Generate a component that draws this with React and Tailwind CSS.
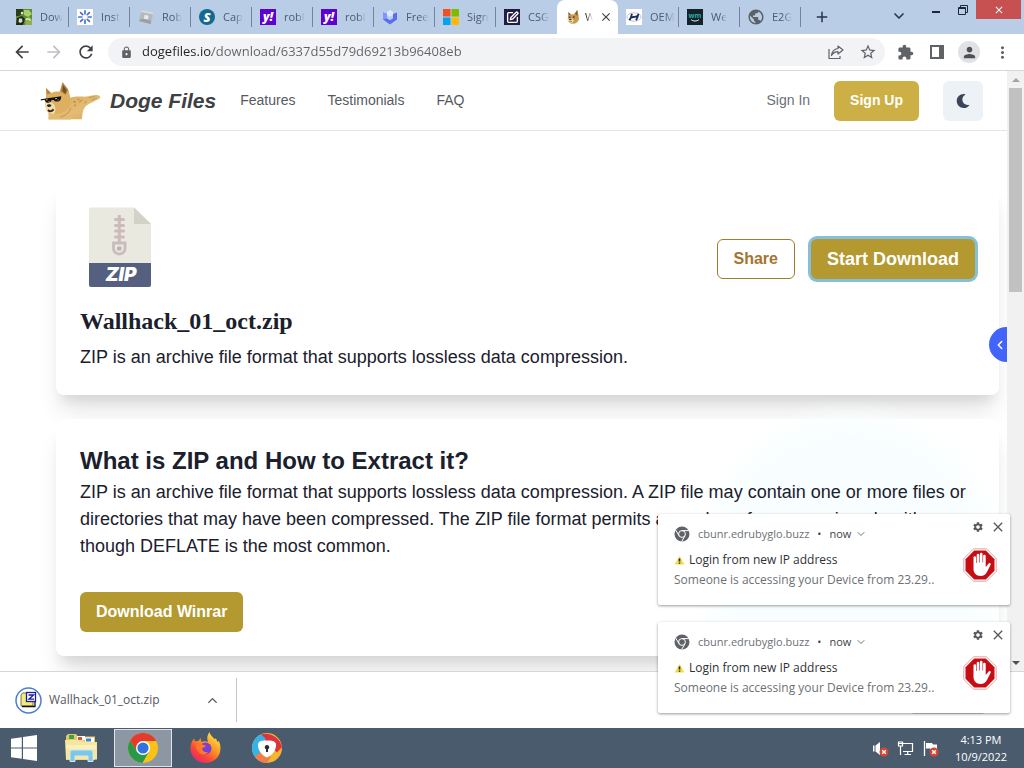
import {
  MdArrowBack, MdArrowForward, MdRefresh, MdLock, MdStarBorder, MdExtension,
  MdPerson, MdMoreVert, MdAdd, MdClose, MdSettings, MdPublic,
} from "react-icons/md";
import { FaMoon } from "react-icons/fa";
import { ChevronDown, ChevronUp, ChevronLeft, SquarePen } from "lucide-react";

function DogeFace() {
  return (
    <svg viewBox="0 0 16 16" className="size-4" aria-hidden="true">
      <path d="M3 7.500 3.300 3l2.500 2.500 3.200-.3L12.300 1l1.200 5.500.5 3.800c-.8 2.700-3 4.500-5.800 4.500C5 14.800 2.800 13 2.800 10.300z" fill="#c89a50" />
      <path d="M3.300 3l.9 3.200 1.600-.7zM12.300 1 10 4.800l2.500 2.200z" fill="#7d5c34" />
      <path d="M3 10C4.800 8.700 7.700 9.300 8.700 11.500c-.4 1.800-1.900 3-3.600 2.800C3.400 13.700 2.500 12 3 10z" fill="#efdcb4" />
      <circle cx="4.800" cy="8.300" r=".7" fill="#2b2018" />
      <circle cx="8.900" cy="8.100" r=".8" fill="#2b2018" />
      <ellipse cx="5.300" cy="10.500" rx="1.200" ry=".8" fill="#2b2018" />
      <path d="M4.300 12.500c.9.600 1.800.5 2.600-.2" stroke="#3a2a1c" strokeWidth=".6" fill="none" />
    </svg>
  );
}

function GardenIcon() {
  return (
    <svg viewBox="0 0 16 16" className="size-4" aria-hidden="true">
      <rect width="16" height="16" fill="#5b8c33" />
      <path d="M0 0h7v4L3 7H0z" fill="#2a3c1a" />
      <path d="M8 1h5l3 4-4 3-4-2z" fill="#a9cf6a" />
      <path d="M1 9l5-2 3 3-2 6H0z" fill="#20291c" />
      <path d="M3 9.500h3l.5 3-2 1.500-2-1z" fill="#d9dccb" />
      <path d="M10 9l4-1 2 3v5H9z" fill="#8fae58" />
      <path d="M9.500 10.500c2-1 4-.5 5 1" stroke="#f1f3e4" strokeWidth="1.200" fill="none" />
      <circle cx="6" cy="4" r="1.200" fill="#e8ecd8" />
    </svg>
  );
}

function BurstIcon() {
  return (
    <svg viewBox="0 0 16 16" className="size-4" aria-hidden="true">
      <rect width="16" height="16" fill="#fff" />
      <g stroke="#3a7bd0" strokeWidth="1.700" strokeLinecap="round">
        <path d="M8 1.800v3M8 11.200v3M1.800 8h3M11.200 8h3" />
        <path d="M3.600 3.600l2.100 2.100M10.300 10.300l2.100 2.100M3.600 12.400l2.100-2.100M10.300 5.700l2.100-2.100" stroke="#5e63cf" />
      </g>
    </svg>
  );
}

function RobloxIcon() {
  return (
    <svg viewBox="0 0 16 16" className="size-4" aria-hidden="true">
      <path d="M3.500 1 15.500 3.500 12.800 15 .8 12z" fill="#b4b9bd" />
      <path d="M3.500 1 15.500 3.500 15 5.500 3 3z" fill="#d6dadd" />
      <path d="M.8 12l4-2.500 8 2 0 3.500z" fill="#999fa4" />
      <path d="M6.700 5.800l4 1-1 3.800-4-.9z" fill="#e6eaed" />
    </svg>
  );
}

function ShieldIcon() {
  return (
    <svg viewBox="0 0 16 16" className="size-4" aria-hidden="true">
      <path d="M1 3.500 5 5v4.500l3 1.800 3-1.800V5l4-1.500v7L8 15.500l-7-5z" fill="#5a6cf0" />
      <path d="M1 3.500 5 5v4.500l-4 1z" fill="#8094ff" />
      <path d="M5 2.800 8 1l3 1.800V6L8 7.800 5 6z" fill="#dfe6ff" />
    </svg>
  );
}

function MicrosoftIcon() {
  return (
    <svg viewBox="0 0 16 16" className="size-4" aria-hidden="true">
      <rect width="7.500" height="7.500" fill="#f25022" />
      <rect x="8.500" width="7.500" height="7.500" fill="#7fba00" />
      <rect y="8.500" width="7.500" height="7.500" fill="#00a4ef" />
      <rect x="8.500" y="8.500" width="7.500" height="7.500" fill="#ffb900" />
    </svg>
  );
}

const YahooIcon = () => (
  <span className="flex size-4 items-center justify-center bg-[#5f01d1] text-[12px] leading-4 font-black text-white italic">y!</span>
);

const tabs = [
  { title: "Dow", icon: <GardenIcon /> },
  { title: "Inst", icon: <BurstIcon /> },
  { title: "Rob", icon: <RobloxIcon /> },
  { title: "Cap", icon: <span className="flex size-4 items-center justify-center rounded-full bg-[#15688f] text-[13px] leading-4 font-black text-white italic">S</span> },
  { title: "robl", icon: <YahooIcon /> },
  { title: "robl", icon: <YahooIcon /> },
  { title: "Free", icon: <ShieldIcon /> },
  { title: "Sign", icon: <MicrosoftIcon /> },
  { title: "CSG", icon: <span className="flex size-4 items-center justify-center bg-[#231c42] text-white"><SquarePen size={13} strokeWidth={2.5} /></span> },
  { title: "W", icon: <DogeFace />, active: true },
  { title: "OEM", icon: <span className="flex size-4 items-center justify-center bg-white text-[#1d2f5f]">
      <svg viewBox="0 0 16 16" className="size-4" aria-hidden="true">
        <ellipse cx="8" cy="8" rx="7" ry="4.200" fill="none" stroke="#aeb8cc" strokeWidth=".8" />
        <path d="M6 4.800c-.5 2.300-1.200 4.300-2.500 6.400M12.500 4.800c-.5 2.300-1.200 4.300-2.500 6.400M4.800 8.800c2-1.300 4.300-.3 6.500-1.800" fill="none" stroke="currentColor" strokeWidth="1.800" />
      </svg>
    </span> },
  { title: "We", icon: <span className="flex size-4 flex-col items-center justify-center bg-[#14222b] text-[7px] leading-[7px] font-bold text-[#2fae9c]">wm
      <svg viewBox="0 0 10 3" className="h-[3px] w-[10px]" aria-hidden="true"><path d="M1 .5c2 2 6 2 8 0" stroke="#e9f3f1" fill="none" /></svg>
    </span> },
  { title: "E2G", icon: <MdPublic size={18} className="-m-px text-[#5c6166]" /> },
];

function TabStrip() {
  return (
    <div className="flex h-[34px] shrink-0 items-stretch bg-[#b9cee6] pl-2">
      <div role="tablist" className="flex min-w-0">
        {tabs.map((t, i) =>
          t.active ? (
            <div key={i} className="flex w-[61px] shrink-0 items-center gap-1 rounded-t-lg bg-white pl-2">
              <button role="tab" aria-selected="true" className="flex items-center gap-1">
                {t.icon}
                <span className="text-[11px] [mask-image:linear-gradient(90deg,#000,transparent_80%)]">{t.title}</span>
              </button>
              <button aria-label="Close tab" className="text-[#3c4043]"><MdClose size={14} /></button>
            </div>
          ) : (
            <button key={i} role="tab" aria-selected="false" className="flex w-[61px] shrink-0 items-center pl-2 text-[#4b5b6e]">
              <span className="mr-2 shrink-0">{t.icon}</span>
              <span className="text-left text-[11px] whitespace-nowrap [mask-image:linear-gradient(90deg,#000_60%,transparent)]">{t.title}</span>
              <span className={tabs[i + 1]?.active ? "ml-auto h-5 w-px" : "ml-auto h-5 w-px bg-[#73859c]"} />
            </button>
          )
        )}
      </div>
      <button aria-label="New tab" className="ml-3 text-[#26354a]"><MdAdd size={18} /></button>
      <div className="ml-auto flex items-start pr-[3px]">
        <button aria-label="Search tabs" className="mt-2 mr-4 text-[#26354a]"><ChevronDown size={16} strokeWidth={2.500} /></button>
        <button aria-label="Minimize" className="flex h-5 w-[26px] items-center justify-center">
          <span className="mt-1 h-[2px] w-2 bg-[#1d2838]" />
        </button>
        <button aria-label="Restore" className="flex h-5 w-[27px] items-center justify-center text-[#1d2838]">
          <svg viewBox="0 0 10 10" className="size-[10px]" fill="none" stroke="currentColor" aria-hidden="true">
            <path d="M.5 2.500h7v7h-7zM2.500 2.500v-2h7v7h-2" /><path d="M.5 3.500h7" />
          </svg>
        </button>
        <button aria-label="Close" className="flex h-[19px] w-[45px] items-center justify-center bg-[#c75050] text-white"><MdClose size={12} /></button>
      </div>
    </div>
  );
}

function Toolbar() {
  return (
    <div className="flex h-[37px] shrink-0 items-center border-b border-[#d5d7da] bg-white pr-3 pl-3 text-[#5f6368]">
      <button aria-label="Back" className="mr-3 text-[#3f4347]"><MdArrowBack size={20} /></button>
      <button aria-label="Forward" className="mr-3 text-[#bdc1c6]"><MdArrowForward size={20} /></button>
      <button aria-label="Reload" className="mr-3 text-[#3f4347]"><MdRefresh size={20} /></button>
      <div className="flex h-7 min-w-0 flex-1 items-center rounded-full bg-[#f1f3f4] pr-2 pl-3">
        <MdLock size={13} className="mr-[9px] shrink-0" />
        <input
          aria-label="Address"
          readOnly
          value="dogefiles.io/download/6337d55d79d69213b96408eb"
          className="min-w-0 flex-1 bg-[linear-gradient(90deg,#202124_70px,#5f6368_70px)] bg-clip-text text-[13px] text-transparent outline-none"
        />
        <button aria-label="Share this page" className="mr-[15px]">
          <svg viewBox="0 0 16 16" className="size-4" fill="none" stroke="currentColor" strokeWidth="1.200" strokeLinejoin="round" aria-hidden="true">
            <path d="M1 5v9.500h11V12" />
            <path d="M10 2l5 4-5 4V7.700C7 7.700 5 9 3.500 11.500 4 7.500 6.500 5 10 4.500z" />
          </svg>
        </button>
        <button aria-label="Bookmark this tab"><MdStarBorder size={18} /></button>
      </div>
      <button aria-label="Extensions" className="mr-4 ml-3"><MdExtension size={17} /></button>
      <button aria-label="Side panel" className="mr-[14px]">
        <svg viewBox="0 0 14 14" className="size-[14px]" aria-hidden="true">
          <path d="M1 1h12v12H1z" fill="none" stroke="currentColor" strokeWidth="2" /><path d="M9 1h4v12H9z" fill="currentColor" />
        </svg>
      </button>
      <button aria-label="Profile" className="mr-[13px] flex size-[22px] items-center justify-center rounded-full bg-[#dfe1e5] text-[#4d5156]"><MdPerson size={17} /></button>
      <button aria-label="Menu"><MdMoreVert size={19} /></button>
    </div>
  );
}

function DogeLogo() {
  return (
    <svg viewBox="0 0 61 40" className="h-10 w-[61px]" aria-hidden="true">
      <defs>
        <linearGradient id="fur" x1="0" y1="0" x2="1" y2="1">
          <stop offset="0" stopColor="#dba957" /><stop offset=".6" stopColor="#e3bc74" /><stop offset="1" stopColor="#d6a857" />
        </linearGradient>
      </defs>
      <path d="M28 17c5-1.500 11-2 17-1.200l8.500-1.600c2.500-.7 5.300-.2 6.300.9.900 1.100.4 2.200-1 3-4 2-8.800 4.200-12.300 6.400-2.500 2-3.500 5-4 8l-.7 5.700H8.500V28z" fill="url(#fur)" />
      <path d="M6 18.500V7l5 5c3-1.300 5.800-1.700 8.600-1.300L22.500 1.200l5.800 7.600c1.500 4 2.200 8.700 2 13.700-1 7.300-7 12-14 12.500C9.500 35 5.500 30.500 5 22z" fill="#ddb061" />
      <path d="M6 7l1.200 6.500L11 12zM22.500 1.200 20.400 10.500l5.300 3.500 2.600-5.200z" fill="#b1853f" />
      <path d="M23 4l-.6 6 3 2.700 1.100-3.700z" fill="#6f5029" />
      <path d="M5.200 21.500c3-1.500 6.500-.5 8.800 1.700 1.700 3.300 2 6.300.3 9.300-1.800 1.300-5.600.2-7.200-2.500-1.300-2.400-2-5.300-1.900-8.500z" fill="#f1dcae" />
      <path d="M9.500 32.500c6.500 1.300 13.500-.2 18.500-4.500l3 10.500H8.500z" fill="#e2ba70" />
      <path d="M.8 18.300 21.300 15.300l-.5 3c-1 2.500-5.500 3.300-7.200.6l-2 .2c-.7 3-4.900 4-6.600.6L4.500 18.800.8 19.600z" fill="#15130f" />
      <path d="M6 19l1.500-.3M8.500 20.500l1-.2M15 17.800l2-.3M17.500 19l1-.2" stroke="#d9d9d9" strokeWidth=".8" />
      <path d="M6.800 24.300c1-1.300 3.700-1.300 4.600 0-.2 2-3.900 2.600-4.600 0z" fill="#27231d" />
      <path d="M8 29c1.800 1.900 4.200 1.500 5.500-.8" stroke="#3a291b" strokeWidth="1.900" fill="none" />
      <path d="M33 20.500l3 .8M37.500 18l2 1.200M42 18.500l-2.500 3M34 25l2-1.500M44.500 22l2-1.500" stroke="#b2843f" strokeWidth="1" />
      <path d="M49 16.800l6-1.300M51 19.300l6-2.300" stroke="#b2935c" strokeWidth=".8" />
      <path d="M20 36c5-1 9-4 11-9" stroke="#c4954c" strokeWidth="1" fill="none" />
    </svg>
  );
}

function ZipIcon() {
  return (
    <svg viewBox="0 0 80 80" className="size-20" role="img" aria-label="ZIP file">
      <path d="M10.500.5H54L71 17v61a2 2 0 0 1-2 2H11a2 2 0 0 1-2-2V2a1.500 1.500 0 0 1 1.500-1.500z" fill="#e9e9e0" />
      <path d="M54 .5 71 17H55.500a1.500 1.500 0 0 1-1.500-1.500z" fill="#d3d2c6" />
      <path d="M9 56h62v22a2 2 0 0 1-2 2H11a2 2 0 0 1-2-2z" fill="#556080" />
      <g stroke="#cbbcbb" strokeWidth="2.200" fill="none">
        <path d="M39.300 8v28" strokeWidth="3" />
        <path d="M35.500 12.500h8M35.500 18.500h8M35.500 24h8M35.500 30h8" strokeWidth="3" strokeLinecap="round" />
        <path d="M33.500 36h11.500v6a5.800 5.800 0 0 1-11.500 0z" strokeWidth="2.800" />
      </g>
      <rect x="37" y="39.500" width="4.500" height="4" rx="1" fill="#c0b1b1" />
      <text x="41" y="74" textAnchor="middle" fontSize="19" fontWeight="900" fontStyle="italic" fill="#fff" fontFamily="Inter, sans-serif">ZIP</text>
    </svg>
  );
}

function SiteHeader() {
  return (
    <header className="flex h-[60px] items-center border-b border-[#e2e4e8] pr-6 pl-10 text-[14px] text-[#565a60]">
      <a href="#home" className="mr-6 flex items-center gap-[9px] text-[21px] font-bold text-[#3e4044] italic">
        <DogeLogo />
        Doge Files
      </a>
      <nav className="flex gap-8">
        <a href="#features">Features</a>
        <a href="#testimonials">Testimonials</a>
        <a href="#faq">FAQ</a>
      </nav>
      <div className="ml-auto flex items-center gap-6">
        <a href="#signin" className="text-[#6b7079]">Sign In</a>
        <button className="h-10 rounded-md bg-[#cdb045] px-4 font-bold text-white">Sign Up</button>
        <button aria-label="Dark mode" className="flex size-10 items-center justify-center rounded-md bg-[#edf2f7] text-[#3b4557]"><FaMoon size={14} /></button>
      </div>
    </header>
  );
}

function Page() {
  return (
    <main className="relative min-w-0 flex-1 overflow-hidden bg-white font-['Liberation_Sans',Arial,sans-serif] text-[#1a202c]">
      <SiteHeader />
      <div className="flex flex-col gap-6 pt-[52px] pr-2 pl-14">
        <section className="rounded-lg bg-white p-6 shadow-[0_20px_25px_-5px_rgba(0,0,0,0.11),0_10px_12px_-5px_rgba(0,0,0,0.08)]">
          <div className="flex items-start justify-between">
            <ZipIcon />
            <div className="mt-8 flex gap-4">
              <button className="h-10 rounded-md border border-[#9c7e2c] px-4 font-bold text-[#a5742f]">Share</button>
              <button className="h-10 rounded-md bg-[#b3992f] px-4 text-[18px] font-bold text-white ring-[3px] ring-[#86bfdb]">Start Download</button>
            </div>
          </div>
          <h2 className="mt-4 font-['Liberation_Serif',serif] text-[24px] leading-9 font-bold">Wallhack_01_oct.zip</h2>
          <p className="mt-1 text-[18px] leading-7">ZIP is an archive file format that supports lossless data compression.</p>
        </section>
        <section className="relative rounded-lg bg-white p-6 shadow-[0_20px_25px_-5px_rgba(0,0,0,0.11),0_10px_12px_-5px_rgba(0,0,0,0.08)]">
          <span className="absolute top-0 right-1 size-[290px] rounded-full bg-[#f8feff] blur-md" />
          <div className="relative">
            <h2 className="text-[24px] leading-9 font-bold">What is ZIP and How to Extract it?</h2>
            <p className="text-[18px] leading-[27px]">
              ZIP is an archive file format that supports lossless data compression. A ZIP file may contain one or more files or
              directories that may have been compressed. The ZIP file format permits a number of compression algorithms, though DEFLATE is the most common.
            </p>
            <button className="mt-8 h-10 rounded-md bg-[#b3992f] px-4 font-bold text-white">Download Winrar</button>
          </div>
        </section>
      </div>
      <button aria-label="Open side panel" className="absolute top-64 -right-[17px] flex size-[35px] items-center rounded-full bg-[#4264fb] pl-1 text-white">
        <ChevronLeft size={14} strokeWidth={2.500} />
      </button>
    </main>
  );
}

function ScrollBar() {
  return (
    <div className="flex w-[17px] shrink-0 flex-col items-center bg-[#f1f1f1]" aria-hidden="true">
      <span className="flex h-[17px] items-center"><svg viewBox="0 0 8 4" className="h-1 w-2"><path d="M0 4 4 0l4 4z" fill="#a3a3a3" /></svg></span>
      <span className="h-[204px] w-[13px] bg-[#c1c1c1]" />
      <span className="mt-auto flex h-[17px] items-center"><svg viewBox="0 0 8 4" className="h-1 w-2"><path d="M0 0h8L4 4z" fill="#505050" /></svg></span>
    </div>
  );
}

function DownloadBar() {
  return (
    <div className="flex h-[57px] shrink-0 items-center border-t border-[#d5d7da] bg-white pr-3">
      <div className="flex h-11 w-[237px] items-center border-r border-[#c4c7cb] pr-4 pl-[15px] text-[12px] text-[#55595e]">
        <button className="flex items-center gap-[7px]">
          <svg viewBox="0 0 27 27" className="size-[27px]" aria-hidden="true">
            <circle cx="13.500" cy="13.500" r="12.500" fill="#fff" stroke="#4a7fd0" strokeWidth="1.500" />
            <path d="M6 8l1.500-2h4L13 8h5v11H6z" fill="#f3ec7c" stroke="#5b5a2e" strokeWidth=".8" />
            <path d="M7 19.500h13V15" stroke="#111" strokeWidth="1.300" fill="none" />
            <rect x="11.500" y="5.500" width="9" height="9" fill="#fff" stroke="#1c1c9c" strokeWidth="1.300" />
            <path d="M13.500 8h5l-4.500 4.200h5" fill="none" stroke="#1c1c9c" strokeWidth="1.300" />
          </svg>
          Wallhack_01_oct.zip
        </button>
        <button aria-label="Download options" className="ml-auto"><ChevronUp size={15} strokeWidth={2.250} /></button>
      </div>
      <button className="mr-3 ml-auto h-7 rounded border border-[#d0d3d7] px-[14px] text-[12px]">Show all</button>
      <button aria-label="Close downloads bar" className="text-[#5f6368]"><MdClose size={14} /></button>
    </div>
  );
}

function ChromeMono() {
  return (
    <svg viewBox="0 0 16 16" className="size-4" aria-hidden="true">
      <circle cx="8" cy="8" r="7.500" fill="#5f6368" />
      <circle cx="8" cy="8" r="3.400" fill="none" stroke="#fff" strokeWidth="1" />
      <path d="M8 4.600h6.800M5 9.700 1.800 4.200M11 9.700l-3.300 5.800" stroke="#fff" strokeWidth="1" />
    </svg>
  );
}

function Notification() {
  return (
    <article className="flex h-[91px] justify-between rounded-xs bg-white pt-[5px] pr-1 pl-4 shadow-[0_1px_3px_rgba(0,0,0,0.4)]">
      <div className="min-w-0 text-[12px] whitespace-nowrap text-[#6d7175]">
        <div className="mt-[6px] flex h-[18px] items-center text-[11px]">
          <ChromeMono />
          <span className="ml-2">cbunr.edrubyglo.buzz</span>
          <span className="mx-2 text-[#3f4347]">•</span>
          <span className="text-[#3f4347]">now</span>
          <ChevronDown size={12} className="ml-1" />
        </div>
        <h3 className="mt-2 flex h-[18px] items-center gap-1 text-[#2f3236]">
          <svg viewBox="0 0 11 10" className="h-[10px] w-[11px]" aria-hidden="true">
            <path d="M5.500 1 10.500 9.500H.5z" fill="#f5dc4c" /><path d="M5.500 3.500v3M5.500 7.500v1.200" stroke="#222" strokeWidth="1.600" />
          </svg>
          Login from new IP address
        </h3>
        <p className="mt-[2px]">Someone is accessing your Device from 23.29..</p>
      </div>
      <div className="flex flex-col items-end">
        <div className="flex h-4 items-center gap-[6px] text-[#55595e]">
          <button aria-label="Notification settings"><MdSettings size={12} /></button>
          <button aria-label="Dismiss"><MdClose size={16} /></button>
        </div>
        <svg viewBox="0 0 34 34" className="mt-[13px] mr-[9px] size-[34px]" aria-hidden="true">
          <path d="M10.500.8h13L33.200 10.500v13L23.500 33.200h-13L.8 23.500v-13z" fill="#fff" stroke="#e58b8b" strokeWidth=".8" />
          <path d="M11.200 2.500h11.600l8.700 8.700v11.600l-8.700 8.700H11.200l-8.700-8.700V11.200z" fill="#c70d14" />
          <path d="M10.500 9.500a1.300 1.300 0 0 1 2.600 0V15h.6V7a1.300 1.300 0 0 1 2.600 0v7.500h.6V6a1.300 1.300 0 0 1 2.600 0v8.500h.6V8a1.300 1.300 0 0 1 2.600 0v11l3-3.500c1.200-1 2.600 0 1.900 1.300L24 24c-1.500 2.600-3.300 4-6.300 4-4.400 0-7.200-2.800-7.200-7z" fill="#fff" />
        </svg>
      </div>
    </article>
  );
}

function TrayBadge() {
  return (
    <>
      <circle cx="12" cy="12" r="4.500" fill="#d64535" />
      <path d="M10.200 10.200l3.600 3.600M13.800 10.200l-3.600 3.600" stroke="#fff" strokeWidth="1.400" />
    </>
  );
}

function Taskbar() {
  return (
    <div className="flex h-10 shrink-0 items-center bg-[#4b5b6e]">
      <button aria-label="Start" className="flex w-12 items-center justify-center">
        <svg viewBox="0 0 26 26" className="size-[26px]" fill="#fff" aria-hidden="true">
          <path d="M0 3.800 10.800 2.300v10.200H0zM12 2.100 26 0v12.500H12zM0 13.600h10.800v10.200L0 22.300zM12 13.600h14V26l-14-2z" />
        </svg>
      </button>
      <button aria-label="File Explorer" className="flex w-[66px] items-center justify-center">
        <svg viewBox="0 0 32 32" className="size-8" aria-hidden="true">
          <path d="M1 4 3 2h8l2 2.500h17V28H1z" fill="#e6c765" />
          <path d="M4 3h5v4H4z" fill="#3aa353" /><path d="M12 4h8v4h-8z" fill="#fff" /><path d="M13 5h4v3h-4z" fill="#d8523f" />
          <path d="M20 5.500h9V10h-9z" fill="#fff" /><path d="M21 6.500h5v3h-5z" fill="#3f83c9" />
          <path d="M0 8h17l2 2h13v17.500H1z" fill="#f8e69c" />
          <path d="M1 13h30v4H1z" fill="#fbf0bd" />
          <path d="M5 20a2 2 0 0 1 2-2h19a2 2 0 0 1 2 2v9.500h-5V24H10v5.500H5z" fill="#7fc6e6" stroke="#c9ecf8" strokeWidth="1" />
        </svg>
      </button>
      <button aria-label="Google Chrome" className="flex h-[38px] w-[58px] items-center justify-center border border-[#dfe4ea] bg-[#8c97a3]">
        <svg viewBox="0 0 30 30" className="size-[30px]" aria-hidden="true">
          <circle cx="15" cy="15" r="15" fill="#fbc116" />
          <path d="M15 8H28.300A15 15 0 0 0 2 7.500L9 18.500z" fill="#e33b2e" />
          <path d="M2 7.500A15 15 0 0 0 14.500 30L21 18.500l-12 0z" fill="#269a47" />
          <circle cx="15" cy="15" r="7" fill="#fff" />
          <circle cx="15" cy="15" r="5.600" fill="#2f72e0" />
        </svg>
      </button>
      <button aria-label="Firefox" className="flex w-[66px] items-center justify-center">
        <svg viewBox="0 0 31 32" className="h-8 w-[31px]" aria-hidden="true">
          <defs>
            <linearGradient id="fox" x1=".85" y1=".05" x2=".2" y2=".95">
              <stop offset="0" stopColor="#ffe54a" /><stop offset=".4" stopColor="#ff9a22" /><stop offset=".75" stopColor="#fb4438" /><stop offset="1" stopColor="#e8276f" />
            </linearGradient>
          </defs>
          <path d="M19.500 0c.5 3 3 4.500 4.800 7L26 6.500l1.500 3.500 1.200-1C31 13 31 19 29 23c-2.700 5.300-8 8-13.500 8C7.500 31 1 25 .5 17 .3 13 1.500 9.500 4 6.500l1 2.700L8.500 9l2-3 .8 3.800c3-1 5-.7 6.700.3-1.500-3.800-.6-7.500 1.500-10.100z" fill="url(#fox)" />
          <circle cx="15.500" cy="16.500" r="6" fill="#7a3fd6" />
          <path d="M6 13c2-2 4-2 5.500-1.500 1 1.700 3 1.500 4.500 2-1 2-3 2-4 3 .3 3 3.500 4.500 6.500 3.500-2.500 3.500-7.500 3-10 0-1.500-2-2.500-4.500-2.500-7z" fill="#ff7a28" />
        </svg>
      </button>
      <button aria-label="Secure browser" className="flex w-[58px] items-center justify-center">
        <svg viewBox="0 0 30 30" className="size-[30px]" aria-hidden="true">
          <circle cx="15" cy="15" r="15" fill="#f5b52e" />
          <path d="M8 1.800C17-2 28 4 30 14l-5 5.500L13 7z" fill="#dc3340" />
          <path d="M9 1.300A15 15 0 0 0 3 24l7 2-3-14 7-6z" fill="#35b3e8" />
          <path d="M3 24a15 15 0 0 0 12 6l4-6-10-6z" fill="#ef7f4c" />
          <path d="M15 7.500c4-.5 8.500.5 9 3.500.5 6-3.500 11-9 13.500-5.500-2.500-9.500-7.500-9-13.500.5-3 5-4 9-3.500z" fill="#fff" />
          <path d="M15 12a2.200 2.200 0 0 1 1 4.200V19h-2v-2.800a2.200 2.200 0 0 1 1-4.200z" fill="#252b35" />
        </svg>
      </button>
      <div className="ml-auto flex items-center gap-2 pr-[17px]">
        <button aria-label="Volume muted">
          <svg viewBox="0 0 17 17" className="size-[17px]" aria-hidden="true">
            <path d="M1 5.500h1.500v6H1zM3.500 5.500 8 2v13l-4.500-3.500z" fill="#fff" /><TrayBadge />
          </svg>
        </button>
        <button aria-label="Network">
          <svg viewBox="0 0 17 17" className="size-[17px]" fill="none" stroke="#fff" strokeWidth="1.200" aria-hidden="true">
            <path d="M6 3.500h9.500v8H6M10.700 12v2.500M7.500 14.500h6.500" /><path d="M1.500 2h4v4h-4zM3.500 6v9M1.500 3.500h4" />
          </svg>
        </button>
        <button aria-label="Action center">
          <svg viewBox="0 0 17 17" className="size-[17px]" aria-hidden="true">
            <path d="M2.500 1v15" stroke="#fff" strokeWidth="1.300" /><path d="M4 3h6l1 1.500h4v5H9l-1-1H4z" fill="#fff" /><TrayBadge />
          </svg>
        </button>
        <time className="ml-2 text-center text-[11px] leading-[17px] text-white">4:13 PM<br />10/9/2022</time>
      </div>
    </div>
  );
}

export default function App() {
  return (
    <div className="relative flex h-screen flex-col overflow-hidden bg-white font-['Open_Sans','Noto_Sans',sans-serif]">
      <TabStrip />
      <Toolbar />
      <div className="flex min-h-0 flex-1">
        <Page />
        <ScrollBar />
      </div>
      <DownloadBar />
      <Taskbar />
      <aside aria-label="Notifications" className="absolute right-[14px] bottom-[55px] flex w-[352px] flex-col gap-[17px]">
        <Notification />
        <Notification />
      </aside>
    </div>
  );
}
